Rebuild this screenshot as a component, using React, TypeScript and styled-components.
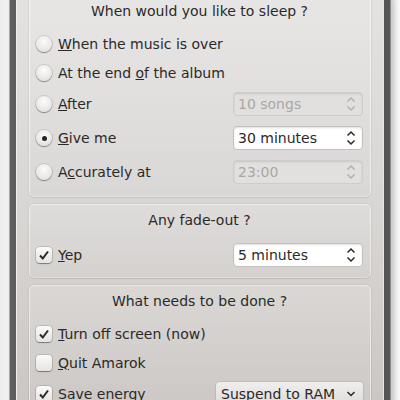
import styled, { createGlobalStyle } from "styled-components";

const GlobalStyle = createGlobalStyle`
  html, body {
    margin: 0;
    padding: 0;
    background: #f4f4f4;
  }
  body {
    font-family: "DejaVu Sans", "Liberation Sans", sans-serif;
    font-size: 14px;
    color: #2b2927;
  }
`;

const Desktop = styled.div`
  width: 400px;
  height: 400px;
  overflow: hidden;
  display: flex;
  padding-left: 10px;
  box-sizing: border-box;
  background: linear-gradient(to right, #ededed, #f2f2f2 8px, #ffffff 100%);
`;

const Window = styled.div`
  width: 380px;
  height: 420px;
  margin-top: -5px;
  box-sizing: border-box;
  border-left: 6px solid #5e5e5e;
  border-right: 6px solid #555555;
  box-shadow: inset 1px 0 0 #f0efee, inset -1px 0 0 #e8e6e4, -1px 0 0 #a9a9a9,
    1px 0 0 #8e8e8e, 4px 0 8px rgba(0, 0, 0, 0.28);
  background: linear-gradient(#e3e2e1 0%, #dad8d6 45%, #cbc6c3 100%);
  padding: 0 13px;
  display: flex;
  flex-direction: column;
  gap: 7px;
`;

const Group = styled.div<{ $bottom: number }>`
  border-radius: 5px;
  border: 1px solid rgba(255, 255, 255, 0.55);
  border-bottom-color: rgba(255, 255, 255, 0.15);
  box-shadow: 0 0 0 1px rgba(0, 0, 0, 0.05), 0 1px 1px rgba(0, 0, 0, 0.04);
  background: linear-gradient(rgba(255, 255, 255, 0.16), rgba(255, 255, 255, 0.02));
  padding: 7px 7px ${(p) => p.$bottom}px 6px;
`;

const Title = styled.div`
  height: 17px;
  line-height: 17px;
  text-align: center;
  margin-bottom: 14px;
`;

const Rows = styled.div`
  display: grid;
  grid-template-columns: 1fr auto;
  row-gap: 10px;
  align-items: center;
`;

const Label = styled.label<{ $h: number }>`
  display: flex;
  align-items: center;
  gap: 6px;
  height: ${(p) => p.$h}px;
  grid-column: 1;
  white-space: nowrap;
`;

const Radio = styled.span<{ $on?: boolean }>`
  width: 16px;
  height: 16px;
  border-radius: 50%;
  box-sizing: border-box;
  flex: none;
  display: flex;
  align-items: center;
  justify-content: center;
  background: radial-gradient(circle at 50% 35%, #fbfbfb, #ebeae9 55%, #d8d6d4 100%);
  box-shadow: 0 1px 1px rgba(0, 0, 0, 0.35), 0 0 0 1px rgba(0, 0, 0, 0.12);
  &::after {
    content: "";
    display: ${(p) => (p.$on ? "block" : "none")};
    width: 5px;
    height: 5px;
    border-radius: 50%;
    background: #262321;
  }
`;

const Check = styled.span`
  width: 16px;
  height: 16px;
  border-radius: 4px;
  box-sizing: border-box;
  flex: none;
  display: flex;
  align-items: center;
  justify-content: center;
  background: linear-gradient(#fafafa, #e6e4e2);
  box-shadow: 0 1px 1px rgba(0, 0, 0, 0.35), 0 0 0 1px rgba(0, 0, 0, 0.12);
`;

const Spin = styled.div<{ $off?: boolean; $w: number }>`
  grid-column: 2;
  width: ${(p) => p.$w}px;
  height: 24px;
  box-sizing: border-box;
  border-radius: 4px;
  border: 1px solid ${(p) => (p.$off ? "#cfccc9" : "#c4c0bd")};
  background: ${(p) => (p.$off ? "#e2e0de" : "#ffffff")};
  box-shadow: inset 0 1px 2px rgba(0, 0, 0, 0.12);
  color: ${(p) => (p.$off ? "#aaa7a4" : "#2b2927")};
  display: flex;
  align-items: center;
  justify-content: space-between;
  padding: 0 6px 0 4px;
`;

const Combo = styled.div`
  grid-column: 2;
  width: 147px;
  height: 24px;
  box-sizing: border-box;
  border-radius: 4px;
  background: linear-gradient(#f0efee, #dedbd8);
  box-shadow: 0 1px 1px rgba(0, 0, 0, 0.2), 0 0 0 1px rgba(0, 0, 0, 0.06);
  display: flex;
  align-items: center;
  justify-content: space-between;
  padding: 0 7px 0 5px;
`;

const Arrows = ({ off }: { off?: boolean }) => (
  <svg width="10" height="18" viewBox="0 0 10 18">
    <path
      d="M1.5 6.5 L5 3 L8.5 6.5 M1.5 11.5 L5 15 L8.5 11.5"
      fill="none"
      stroke={off ? "#b3b0ad" : "#2b2927"}
      strokeWidth="1.5"
    />
  </svg>
);

const Down = () => (
  <svg width="10" height="8" viewBox="0 0 10 8">
    <path d="M1.5 2 L5 5.5 L8.5 2" fill="none" stroke="#2b2927" strokeWidth="1.5" />
  </svg>
);

const Tick = () => (
  <svg width="16" height="16" viewBox="0 0 16 16">
    <path d="M4 8.5 L6.8 11.5 L12 4.5" fill="none" stroke="#2b2927" strokeWidth="2" />
  </svg>
);

export default function App() {
  return (
    <>
      <GlobalStyle />
      <Desktop>
        <Window>
          <Group $bottom={12}>
            <Title>When would you like to sleep ?</Title>
            <Rows>
              <Label $h={19}>
                <Radio />
                <span>
                  <u>W</u>hen the music is over
                </span>
              </Label>
              <Label $h={19}>
                <Radio />
                <span>
                  At the end <u>o</u>f the album
                </span>
              </Label>
              <Label $h={24}>
                <Radio />
                <span>
                  <u>A</u>fter
                </span>
              </Label>
              <Spin $off $w={130}>
                <span>10 songs</span>
                <Arrows off />
              </Spin>
              <Label $h={24}>
                <Radio $on />
                <span>
                  <u>G</u>ive me
                </span>
              </Label>
              <Spin $w={130}>
                <span>30 minutes</span>
                <Arrows />
              </Spin>
              <Label $h={24}>
                <Radio />
                <span>
                  A<u>c</u>curately at
                </span>
              </Label>
              <Spin $off $w={130}>
                <span>23:00</span>
                <Arrows off />
              </Spin>
            </Rows>
          </Group>
          <Group $bottom={10}>
            <Title>Any fade-out ?</Title>
            <Rows>
              <Label $h={24}>
                <Check>
                  <Tick />
                </Check>
                <span>
                  <u>Y</u>ep
                </span>
              </Label>
              <Spin $w={130}>
                <span>5 minutes</span>
                <Arrows />
              </Spin>
            </Rows>
          </Group>
          <Group $bottom={10}>
            <Title>What needs to be done ?</Title>
            <Rows>
              <Label $h={19}>
                <Check>
                  <Tick />
                </Check>
                <span>
                  <u>T</u>urn off screen (now)
                </span>
              </Label>
              <Label $h={19}>
                <Check />
                <span>
                  <u>Q</u>uit Amarok
                </span>
              </Label>
              <Label $h={24}>
                <Check>
                  <Tick />
                </Check>
                <span>Save energy</span>
              </Label>
              <Combo>
                <span>Suspend to RAM</span>
                <Down />
              </Combo>
            </Rows>
          </Group>
        </Window>
      </Desktop>
    </>
  );
}
